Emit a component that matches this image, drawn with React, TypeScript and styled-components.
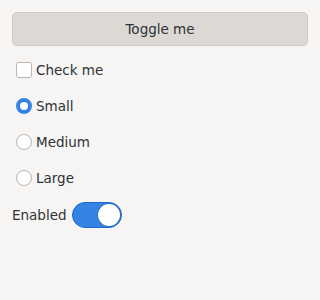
import { useState } from "react";
import styled, { createGlobalStyle } from "styled-components";

const GlobalStyle = createGlobalStyle`
  html, body {
    margin: 0;
    padding: 0;
    background: #f6f5f4;
    font-family: "DejaVu Sans", sans-serif;
    font-size: 13.5px;
    color: #2e3436;
  }
`;

const Window = styled.div`
  display: flex;
  flex-direction: column;
  padding: 12px;
  width: 320px;
  height: 300px;
  box-sizing: border-box;
`;

const Button = styled.button`
  height: 34px;
  border: 1px solid #cdc9c4;
  border-radius: 5px;
  background: #dcd9d5;
  color: #2e3436;
  font: inherit;
  margin-bottom: 6px;
`;

const Row = styled.label`
  display: flex;
  align-items: center;
  gap: 4px;
  height: 36px;
  padding-left: 4px;
`;

const Box = styled.span<{ $round?: boolean; $checked?: boolean }>`
  width: 16px;
  height: 16px;
  box-sizing: border-box;
  border-radius: ${(p) => (p.$round ? "50%" : "3px")};
  border: ${(p) => (p.$checked ? "4px solid #3584e4" : "1px solid #bab5af")};
  background: #ffffff;
`;

const SwitchRow = styled.div`
  display: flex;
  align-items: center;
  gap: 5px;
  margin-top: 6px;
`;

const Track = styled.span<{ $on: boolean }>`
  display: flex;
  justify-content: ${(p) => (p.$on ? "flex-end" : "flex-start")};
  align-items: center;
  width: 50px;
  height: 26px;
  box-sizing: border-box;
  padding: 1px;
  border-radius: 13px;
  border: 1px solid ${(p) => (p.$on ? "#1b6acb" : "#c0bbb5")};
  background: ${(p) => (p.$on ? "#3584e4" : "#e1dedb")};
`;

const Knob = styled.span`
  width: 22px;
  height: 22px;
  border-radius: 50%;
  background: #ffffff;
  box-shadow: 0 0 0 1px rgba(0, 0, 0, 0.12);
`;

export default function App() {
  const [size, setSize] = useState("Small");
  const [checked, setChecked] = useState(false);
  const [on, setOn] = useState(true);
  return (
    <>
      <GlobalStyle />
      <Window>
        <Button>Toggle me</Button>
        <Row onClick={() => setChecked(!checked)}>
          <Box $checked={checked} />
          Check me
        </Row>
        {["Small", "Medium", "Large"].map((s) => (
          <Row key={s} onClick={() => setSize(s)}>
            <Box $round $checked={size === s} />
            {s}
          </Row>
        ))}
        <SwitchRow>
          Enabled
          <Track $on={on} onClick={() => setOn(!on)}>
            <Knob />
          </Track>
        </SwitchRow>
      </Window>
    </>
  );
}
